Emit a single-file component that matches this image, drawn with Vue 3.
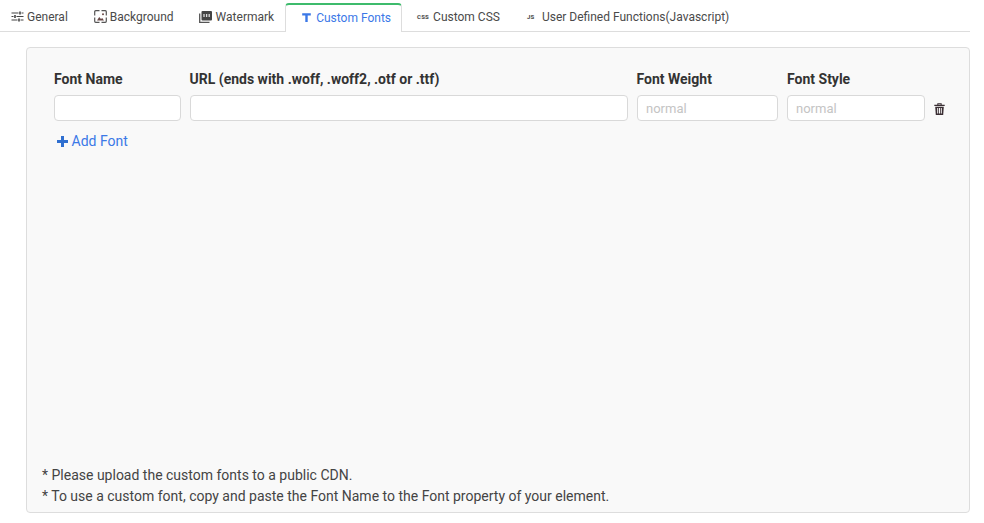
<script setup>
const tabs = [
  { label: 'General', icon: 'sliders' },
  { label: 'Background', icon: 'image' },
  { label: 'Watermark', icon: 'wm' },
  { label: 'Custom Fonts', icon: 't', active: true },
  { label: 'Custom CSS', icon: 'css' },
  { label: 'User Defined Functions(Javascript)', icon: 'js' },
]
</script>

<template>
  <div class="page">
    <div class="tabs">
      <div v-for="t in tabs" :key="t.label" class="tab" :class="[t.icon, { active: t.active }]">
        <svg v-if="t.icon === 'sliders'" class="ic" width="13" height="11" viewBox="0 0 13 11">
          <path d="M.5 2h7M10.500 2h2M.5 5.500h2M5.500 5.500h7M.5 9h6M9.500 9h3" stroke="#444" stroke-width="1.200" fill="none" />
          <path d="M9 .5v3M4 4v3M8 7.500v3" stroke="#444" stroke-width="1.600" fill="none" />
        </svg>
        <svg v-else-if="t.icon === 'image'" class="ic" width="13" height="13" viewBox="0 0 13 13">
          <path d="M5.500 .7H1.700a1 1 0 0 0-1 1V5.500M7.500 .7h3.800a1 1 0 0 1 1 1V5.500M.7 7.500v3.800a1 1 0 0 0 1 1H5.500M12.300 7.500v3.800a1 1 0 0 1-1 1H7.500" stroke="#555" stroke-width="1.200" fill="none" />
          <path d="M3 10.500 5.200 7l1.800 2 1.200-1 1.800 2.500z" fill="#6b4a48" />
          <circle cx="9" cy="4.200" r="1" fill="#6b4a48" />
        </svg>
        <svg v-else-if="t.icon === 'wm'" class="ic" width="13" height="12" viewBox="0 0 13 12">
          <rect x="2.500" y="0" width="10.500" height="9.500" rx="1" fill="#444" />
          <path d="M.7 2.500v8.800h9.800" stroke="#555" stroke-width="1.300" fill="none" />
          <path d="M5 3v3M7.600 3v3M10.200 3v3" stroke="#ddd" stroke-width="1.300" />
        </svg>
        <svg v-else-if="t.icon === 't'" class="ic" width="9" height="9" viewBox="0 0 9 9">
          <path d="M.2.300h8.600v2.200H5.700V9H3.300V2.500H.2z" fill="#3b78e7" />
        </svg>
        <span v-else-if="t.icon === 'css'" class="mini">CSS</span>
        <span v-else class="mini">JS</span>
        <span>{{ t.label }}</span>
      </div>
      <div class="tab-fill"></div>
    </div>

    <div class="panel">
      <div class="grid">
        <div class="head">Font Name</div>
        <div class="head nudge">URL (ends with .woff, .woff2, .otf or .ttf)</div>
        <div class="head nudge">Font Weight</div>
        <div class="head">Font Style</div>
        <div></div>
        <input class="field" />
        <input class="field" />
        <input class="field" placeholder="normal" />
        <input class="field" placeholder="normal" />
        <svg class="trash" width="11" height="12" viewBox="0 0 11 12">
          <path d="M.3 1.800h10.400v1.300H.3zM3.300 1.800V.3h4.400v1.500h-1V1.200H4.300v.6z" fill="#3a2e33" />
          <path d="M1.200 3.800h8.600L9.200 12H1.800zM3.200 5v5.600h1V5zM5 5v5.600h1V5zM6.800 5v5.600h1V5z" fill="#3a2e33" fill-rule="evenodd" />
        </svg>
      </div>
      <div class="add">
        <svg width="11" height="11" viewBox="0 0 11 11"><path d="M4 0h3v4h4v3H7v4H4V7H0V4h4z" fill="#2f6fd0" /></svg>
        <span>Add Font</span>
      </div>
      <div class="notes">
        <div>* Please upload the custom fonts to a public CDN.</div>
        <div>* To use a custom font, copy and paste the Font Name to the Font property of your element.</div>
      </div>
    </div>
  </div>
</template>

<style>
html, body { margin: 0; background: #fff; }
</style>

<style scoped>
.page {
  width: 984px;
  height: 523px;
  box-sizing: border-box;
  font-family: Roboto, "Liberation Sans", sans-serif;
  color: #444;
  overflow: hidden;
}
.tabs {
  display: flex;
  align-items: flex-end;
  height: 32px;
  width: 970px;
  box-sizing: border-box;
  border-bottom: 1px solid #ddd;
}
.tab {
  display: flex;
  align-items: center;
  gap: 3px;
  height: 31px;
  padding-top: 2px;
  box-sizing: border-box;
  font-size: 12px;
  color: #4a4a4a;
  white-space: nowrap;
}
.tab.sliders { padding-left: 11px; padding-right: 26px; }
.tab.image { padding-right: 25px; }
.tab.wm { padding-right: 11px; gap: 4px; }
.tab.t { padding-left: 16px; padding-right: 10px; }
.tab.css { padding-left: 15px; padding-right: 27px; gap: 4px; }
.tab.js { gap: 7.500px; }
.tab.active {
  height: 29px;
  margin-bottom: -1px;
  padding-top: 0;
  padding-bottom: 2px;
  background: #fff;
  color: #3b78e7;
  border: 1px solid #ddd;
  border-top: 2px solid #3dbb6c;
  border-bottom: 0;
  border-radius: 4px 4px 0 0;
  gap: 5px;
}
.tab-fill { flex: 1; }
.ic { flex: none; }
.mini {
  font-size: 6px;
  font-weight: 900;
  color: #555;
  line-height: 1;
  letter-spacing: 0.2px;
}
.panel {
  position: relative;
  margin: 15px 0 0 26px;
  width: 944px;
  height: 466px;
  box-sizing: border-box;
  background: #f9f9f9;
  border: 1px solid #ddd;
  border-radius: 4px;
  padding: 21px 0 0 27px;
  display: flex;
  flex-direction: column;
}
.grid {
  display: grid;
  grid-template-columns: 127px 438px 141px 138px 11px;
  column-gap: 9px;
  row-gap: 6px;
  align-items: center;
}
.head {
  font-size: 14px;
  font-weight: 700;
  color: #333;
  line-height: 20px;
  white-space: nowrap;
}
.head.nudge { margin-left: -0.5px; }
.field {
  box-sizing: border-box;
  width: 100%;
  height: 26px;
  background: #fff;
  border: 1px solid #d9d9d9;
  border-radius: 4px;
  padding: 0 8px;
  font: 13px Roboto, sans-serif;
  outline: none;
}
.field::placeholder { color: #c4c4c4; opacity: 1; }
.trash { justify-self: start; margin-top: 2px; }
.add {
  display: flex;
  align-items: center;
  gap: 3.5px;
  margin: 10px 0 0 3px;
  font-size: 14px;
  line-height: 20px;
  color: #3b78e7;
}
.notes {
  margin-top: auto;
  margin-left: -12px;
  padding-bottom: 5px;
  font-size: 14px;
  line-height: 21px;
  color: #444;
}
</style>
